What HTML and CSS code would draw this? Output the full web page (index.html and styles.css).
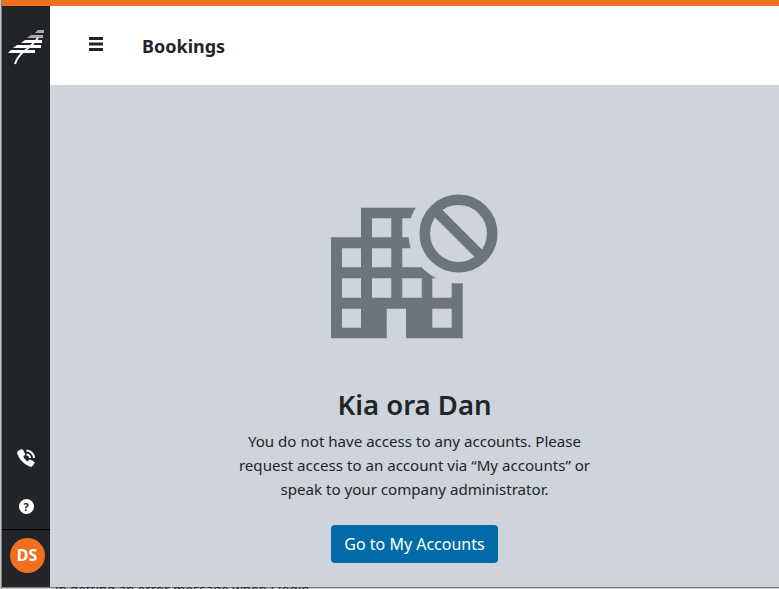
FILE: index.html
```html
<!DOCTYPE html>
<html lang="en">
<head>
  <meta charset="UTF-8" />
  <title>Bookings</title>
  <link rel="stylesheet" href="styles.css">
</head>
<body>
  <div class="edge"></div>
  <div class="app">
    <div class="top-bar"></div>
    <div class="shell">
      <nav class="sidebar">
        <svg class="logo" viewBox="0 0 38 36" width="38" height="36">
          <g class="leaf-dim">
            <path d="M27 4h9V1h-6z" />
            <path d="M19 9h16V6H23z" />
          </g>
          <g class="leaf-bright">
            <path d="M13 14h21v-3H17z" />
            <path d="M5 19h28v-3H9z" />
            <path d="M0 24h27v-3H3z" />
          </g>
          <path class="frond" d="M7 35C9 28 13 24 19 20C24 16 27 13 30 9" />
        </svg>
        <div class="side-bottom">
          <svg class="side-icon" viewBox="0 0 18 18" width="18" height="18">
            <path class="handset" d="M4.500 .5 1.500 2C.5 2.500.3 3.500.6 4.500 2.500 10.500 7 15 13 17.300c1 .4 2 .2 2.700-.8l1.500-2.400c.3-.5.1-1.100-.4-1.400l-3.600-1.700c-.5-.2-1-.1-1.300.3l-1.100 1.500C8.900 11.800 6.900 9.600 5.900 7.400l1.500-1.100c.4-.3.5-.8.300-1.300L5.800 1C5.600.5 5 .2 4.500.5z" />
            <path class="wave" d="M9.500 5.500a3.500 3.500 0 0 1 3.500 3.500M9.500 1.500A8 8 0 0 1 17 9" />
          </svg>
          <span class="help">?</span>
          <div class="avatar-row">
            <span class="avatar">DS</span>
          </div>
        </div>
      </nav>
      <div class="content">
        <header class="header">
          <svg class="burger" viewBox="0 0 14 14" width="14" height="14">
            <path d="M0 0h14v3H0zM0 5.500h14v3H0zM0 11h14v3H0z" />
          </svg>
          <h1 class="page-title">Bookings</h1>
        </header>
        <main class="main">
          <svg class="no-access" viewBox="0 0 168 146" width="168" height="146">
            <mask id="ring-gap">
              <rect width="168" height="146" fill="#fff" />
              <circle cx="127.500" cy="39.500" r="50" fill="#000" />
            </mask>
            <path mask="url(#ring-gap)" fill-rule="evenodd" d="M30 13.700H131.700V144.300H75V114.700H55.700V144.300H0V43.300H30ZM41 24.300V43.300H60.300V24.300ZM71.300 24.300V43.300H90.700V24.300ZM11 54.300V73.300H30V54.300ZM41 54.300V73.300H60.300V54.300ZM71.300 54.300V73.300H90.700V54.300ZM11 84.300V103.700H30V84.300ZM41 84.300V103.700H60.300V84.300ZM71.300 84.300V103.700H90.700V84.300ZM101.300 84.300V103.700H120.700V84.300ZM11 114.700V133.700H30V114.700ZM101.300 114.700V133.700H120.700V114.700Z" />
            <circle class="ban" cx="127.500" cy="39.500" r="33.700" />
            <path class="ban" d="M104 16 151 63" />
          </svg>
          <h2 class="greeting">Kia ora Dan</h2>
          <p class="message">You do not have access to any accounts. Please request access to an account via “My accounts” or speak to your company administrator.</p>
          <a class="btn" href="#">Go to My Accounts</a>
        </main>
      </div>
    </div>
    <div class="bottom-strip">in getting an error message when I login</div>
  </div>
</body>
</html>
```

FILE: styles.css
```css
* {
  box-sizing: border-box;
}

html, body {
  height: 100%;
}

body {
  margin: 0;
  display: flex;
  font-family: 'Noto Sans', 'Open Sans', sans-serif;
  color: #212529;
  background-color: #fff;
  overflow: hidden;
}

.edge {
  width: 2px;
  background: linear-gradient(to right, #c8c8c8 50%, #7d7d7d 50%);
}

.app {
  flex: 1;
  display: flex;
  flex-direction: column;
  min-width: 0;
}

.top-bar {
  height: 6px;
  background-color: #f0701f;
  flex-shrink: 0;
}

.shell {
  flex: 1;
  display: flex;
  min-height: 0;
}

.sidebar {
  width: 48px;
  background-color: #212529;
  display: flex;
  flex-direction: column;
  justify-content: space-between;
  align-items: center;
  padding-top: 23px;
}

.logo {
  display: block;
  margin-left: 2px;
}

.frond {
  fill: none;
  stroke: #fff;
  stroke-width: 2;
}

.leaf-bright {
  fill: #fff;
}

.leaf-dim {
  fill: #a9abad;
}

.side-bottom {
  width: 100%;
  display: flex;
  flex-direction: column;
  align-items: center;
}

.side-icon {
  fill: #fff;
  margin-bottom: 32px;
}

.handset {
  stroke: #fff;
  stroke-width: 0.700;
}

.wave {
  fill: none;
  stroke: #fff;
  stroke-width: 2;
}

.help {
  width: 15px;
  height: 15px;
  border-radius: 50%;
  background-color: #fff;
  color: #212529;
  font-size: 11px;
  font-weight: 700;
  line-height: 15px;
  text-align: center;
  margin-bottom: 15px;
}

.avatar-row {
  width: 100%;
  border-top: 1px solid #000;
  padding: 8px 0 14px 2px;
  display: flex;
  justify-content: center;
}

.avatar {
  width: 35px;
  height: 35px;
  border-radius: 50%;
  background-color: #f0701f;
  color: #fff;
  font-size: 16px;
  font-weight: 700;
  line-height: 35px;
  text-align: center;
}

.content {
  flex: 1;
  display: flex;
  flex-direction: column;
  min-width: 0;
}

.header {
  height: 79px;
  background-color: #fff;
  display: flex;
  align-items: center;
  padding-left: 39px;
  gap: 39px;
  flex-shrink: 0;
}

.burger {
  fill: #212529;
  margin-top: -3px;
}

.page-title {
  margin: 0;
  font-size: 18px;
  font-weight: 700;
}

.main {
  flex: 1;
  background-color: #ced3dc;
  display: flex;
  flex-direction: column;
  align-items: center;
  padding-top: 109px;
  min-height: 0;
}

.no-access {
  fill: #6c757d;
  display: block;
}

.ban {
  fill: none;
  stroke: #6c757d;
  stroke-width: 10.600;
}

.greeting {
  margin: 47px 0 0;
  font-size: 27.500px;
  line-height: 36px;
  font-weight: 600;
}

.message {
  width: 370px;
  margin: 6px 0 0;
  font-size: 15.100px;
  line-height: 24px;
  text-align: center;
}

.btn {
  margin-top: 24px;
  width: 167px;
  height: 38px;
  line-height: 38px;
  text-align: center;
  background-color: #006ba6;
  color: #fff;
  font-size: 16px;
  text-decoration: none;
  border-radius: 4px;
}

.bottom-strip {
  height: 2px;
  padding-left: 53px;
  background: linear-gradient(to bottom, #7d7d7d 50%, #c8c8c8 50%);
  font-size: 13.300px;
  line-height: 4px;
  white-space: nowrap;
  overflow: hidden;
  flex-shrink: 0;
}
```
